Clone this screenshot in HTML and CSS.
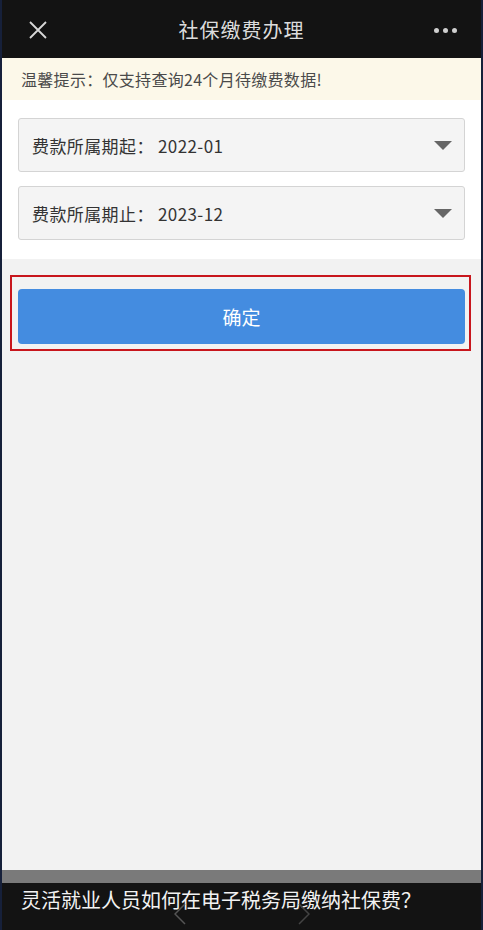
FILE: index.html
```html
<!DOCTYPE html>
<html lang="zh">
<head>
    <meta charset="UTF-8" />
    <title>社保缴费办理</title>
    <link rel="stylesheet" href="styles.css">
</head>
<body>
    <div class="phone">
        <div class="header">
            <svg class="close" width="20" height="20" viewBox="0 0 20 20">
                <path d="M2 2L18 18M18 2L2 18" stroke="#d8d8d8" stroke-width="1.8" fill="none" />
            </svg>
            <div class="title">社保缴费办理</div>
            <div class="more"><span></span><span></span><span></span></div>
        </div>
        <div class="notice">温馨提示：仅支持查询24个月待缴费数据!</div>
        <div class="form">
            <div class="select">
                <span>费款所属期起： 2022-01</span>
                <i class="arrow"></i>
            </div>
            <div class="select">
                <span>费款所属期止： 2023-12</span>
                <i class="arrow"></i>
            </div>
        </div>
        <div class="main">
            <div class="outline">
                <button class="ok">确定</button>
            </div>
        </div>
        <div class="bar"></div>
        <div class="footer">
            <p>灵活就业人员如何在电子税务局缴纳社保费？</p>
            <svg class="chev left" width="12" height="22" viewBox="0 0 12 22">
                <path d="M11 1L1 11L11 21" stroke="#555" stroke-width="1.5" fill="none" />
            </svg>
            <svg class="chev right" width="12" height="22" viewBox="0 0 12 22">
                <path d="M1 1L11 11L1 21" stroke="#444" stroke-width="1.5" fill="none" />
            </svg>
        </div>
    </div>
</body>
</html>
```

FILE: styles.css
```css
* {
    margin: 0;
    padding: 0;
    box-sizing: border-box;
    font-family: 'Noto Sans CJK SC', 'Noto Sans', sans-serif;
}

body {
    background-color: #16203a;
    height: 930px;
    overflow: hidden;
}

.phone {
    margin: 0 2px;
    height: 930px;
    display: flex;
    flex-direction: column;
    background-color: #f2f2f2;
}

.header {
    height: 58px;
    background-color: #131313;
    display: flex;
    align-items: center;
    justify-content: space-between;
    padding: 0 24px 0 26px;
    position: relative;
}

.close {
    margin-top: 2px;
}

.title {
    position: absolute;
    left: 0;
    right: 0;
    text-align: center;
    color: #dcdcdc;
    font-size: 20px;
    letter-spacing: 1px;
    pointer-events: none;
}

.more {
    display: flex;
    gap: 4px;
    margin-top: 2px;
}

.more span {
    width: 5px;
    height: 5px;
    border-radius: 50%;
    background-color: #cfcfcf;
}

.notice {
    height: 42px;
    background-color: #fcf8e9;
    color: #4a4a4a;
    font-size: 16px;
    line-height: 42px;
    padding-left: 19px;
    letter-spacing: 0.3px;
}

.form {
    background-color: #fff;
    padding: 18px 16px 19px 16px;
    display: flex;
    flex-direction: column;
    gap: 14px;
}

.select {
    height: 54px;
    border: 1px solid #d4d4d4;
    border-radius: 3px;
    background-color: #f4f4f4;
    display: flex;
    align-items: center;
    justify-content: space-between;
    padding: 0 12px 0 13px;
    color: #333;
    font-size: 17px;
    letter-spacing: 0.4px;
}

.arrow {
    width: 0;
    height: 0;
    border-left: 9px solid transparent;
    border-right: 9px solid transparent;
    border-top: 9px solid #666;
    margin-top: 1px;
}

.main {
    flex: 1;
    padding: 16px 10px 0 8px;
}

.outline {
    border: 2px solid #c8161d;
    padding: 12px 4px 5px 6px;
}

.ok {
    display: block;
    width: 100%;
    height: 55px;
    border: 0;
    border-radius: 4px;
    background-color: #448ce0;
    color: #fff;
    font-size: 19px;
}

.bar {
    height: 13px;
    background-color: #7a7a7a;
}

.footer {
    height: 47px;
    background-color: #131313;
    position: relative;
    padding: 4px 0 0 19px;
}

.footer p {
    color: #f2f2f2;
    font-size: 20px;
    line-height: 26px;
}

.chev {
    position: absolute;
    top: 20px;
}

.chev.left {
    left: 172px;
}

.chev.right {
    left: 296px;
}
```
